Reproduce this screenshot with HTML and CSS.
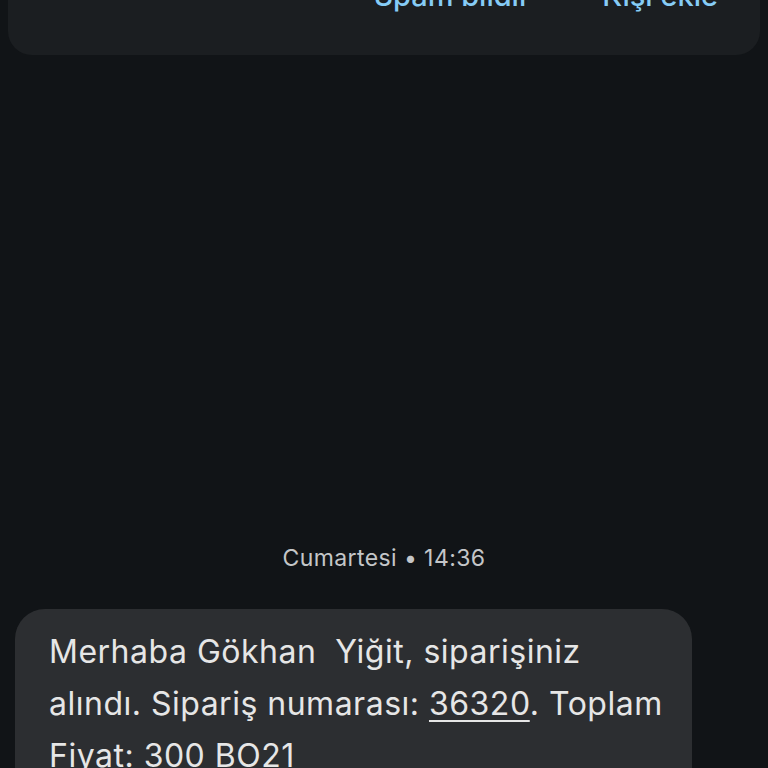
FILE: index.html
```html
<!DOCTYPE html>
<html lang="tr">
<head>
    <meta charset="UTF-8">
    <meta name="viewport" content="width=device-width, initial-scale=1.0">
    <title>Mesajlar</title>
    <link rel="stylesheet" href="styles.css">
</head>
<body>
    <div class="sender-card">
        <a href="#" class="card-action">Spam bildir</a>
        <a href="#" class="card-action">Kişi ekle</a>
    </div>

    <section class="thread">
        <p class="timestamp">Cumartesi • 14:36</p>
        <div class="bubble">
            Merhaba Gökhan&nbsp; Yiğit, siparişiniz alındı. Sipariş numarası: <span class="link">36320</span>. Toplam Fiyat: 300 BO21
        </div>
    </section>
</body>
</html>
```

FILE: styles.css
```css
* {
    box-sizing: border-box;
}

html, body {
    height: 100%;
}

body {
    font-family: Inter, Roboto, "Noto Sans", sans-serif;
    margin: 0;
    padding: 0;
    background: #111417;
    color: #e3e3e3;
    overflow: hidden;
}

.sender-card {
    margin: -22px 8px 0;
    padding: 0 42px 41px;
    background: #1b1e21;
    border-radius: 0 0 24px 24px;
    display: flex;
    justify-content: flex-end;
    gap: 72px;
}

.card-action {
    color: #86ccf6;
    text-decoration: none;
    font-size: 29px;
    line-height: 36px;
    font-weight: 500;
}

.thread {
    padding: 0 15px;
}

.timestamp {
    margin: 488px 0 0;
    text-align: center;
    font-size: 23px;
    line-height: 30px;
    letter-spacing: 0.4px;
    color: #c4c6c8;
}

.bubble {
    margin-top: 36px;
    width: 677px;
    padding: 17px 22px 20px 34px;
    background: #2c2e31;
    border-radius: 30px;
    font-size: 32px;
    line-height: 52px;
    letter-spacing: 0.5px;
    color: #e6e6e6;
}

.link {
    text-decoration: underline;
    text-decoration-thickness: 2px;
    text-underline-offset: 5px;
}
```
